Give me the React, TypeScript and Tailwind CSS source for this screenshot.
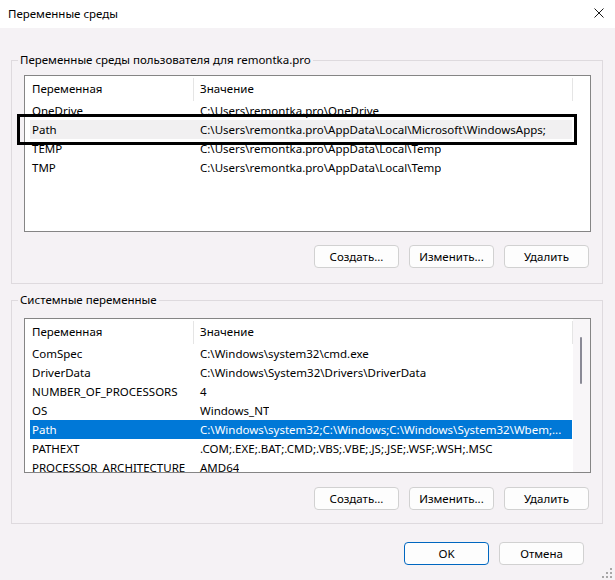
type Row = [string, string];

const userVars: Row[] = [
  ["OneDrive", "C:\\Users\\remontka.pro\\OneDrive"],
  ["Path", "C:\\Users\\remontka.pro\\AppData\\Local\\Microsoft\\WindowsApps;"],
  ["TEMP", "C:\\Users\\remontka.pro\\AppData\\Local\\Temp"],
  ["TMP", "C:\\Users\\remontka.pro\\AppData\\Local\\Temp"],
];

const systemVars: Row[] = [
  ["ComSpec", "C:\\Windows\\system32\\cmd.exe"],
  ["DriverData", "C:\\Windows\\System32\\Drivers\\DriverData"],
  ["NUMBER_OF_PROCESSORS", "4"],
  ["OS", "Windows_NT"],
  ["Path", "C:\\Windows\\system32;C:\\Windows;C:\\Windows\\System32\\Wbem;..."],
  ["PATHEXT", ".COM;.EXE;.BAT;.CMD;.VBS;.VBE;.JS;.JSE;.WSF;.WSH;.MSC"],
  ["PROCESSOR_ARCHITECTURE", "AMD64"],
];

function Button({ label, primary = false }: { label: string; primary?: boolean }) {
  return (
    <button
      className={`w-[85px] h-[23px] rounded-[4px] border bg-[#fdfdfd] text-[11.5px] leading-none text-black ${
        primary ? "border-[#0067c0]" : "border-[#d1d1d1]"
      }`}
    >
      {label}
    </button>
  );
}

function VarList({
  rows,
  focused,
  selected,
  scroll = false,
  height,
}: {
  rows: Row[];
  focused?: number;
  selected?: number;
  scroll?: boolean;
  height: string;
}) {
  return (
    <div className={`flex w-[567px] ${height} border border-[#858585] bg-white overflow-hidden`}>
      <div className="flex flex-col w-[548px]">
        <div className="flex h-[25px] shrink-0">
          <div className="flex items-center w-[168px] pl-[7px]">Переменная</div>
          <div className="w-px mt-[2px] bg-[#e5e5e5]" />
          <div className="flex items-center w-[378px] pl-[6px]">Значение</div>
          <div className="w-px mt-[2px] bg-[#e5e5e5]" />
        </div>
        {rows.map(([name, value], i) => (
          <div
            key={name}
            className={`flex items-center shrink-0 h-[19px] ml-[5px] w-[542px] whitespace-nowrap ${
              i === selected ? "bg-[#0078d7] text-white" : i === focused ? "bg-[#f1f0f1]" : ""
            }`}
          >
            <div className="w-[164px] pl-[2px] overflow-hidden">{name}</div>
            <div className="pl-[6px] overflow-hidden">{value}</div>
          </div>
        ))}
      </div>
      {scroll && (
        <div className="flex-1 bg-[#f8f6f8] pt-[18px]">
          <div className="ml-[7px] w-[2px] h-[47px] rounded-full bg-[#8a8a96]" />
        </div>
      )}
    </div>
  );
}

function ActionRow({ className = "" }: { className?: string }) {
  return (
    <div className={`flex justify-end gap-[10px] w-[567px] pr-[2px] ${className}`}>
      <Button label="Создать..." />
      <Button label="Изменить..." />
      <Button label="Удалить" />
    </div>
  );
}

export default function App() {
  return (
    <div className="relative w-[615px] h-[580px] bg-[#f5f2f5] text-[11.5px] text-black font-['Noto_Sans',sans-serif] overflow-hidden">
      <div className="flex items-center justify-between h-[28px] bg-white pl-[8px] pr-[11px]">
        <span>Переменные среды</span>
        <svg width="10" height="10" viewBox="0 0 10 10" className="mb-[2px]">
          <path d="M0.5 0.5 L9.5 9.5 M9.5 0.5 L0.5 9.5" stroke="#1a1a1a" strokeWidth="1" />
        </svg>
      </div>

      <fieldset className="mt-[24px] ml-[11px] w-[592px] border border-[#dedade] pl-[6px] pt-[7px] pb-[15px]">
        <legend className="px-[2px] leading-[16px]">Переменные среды пользователя для remontka.pro</legend>
        <div className="ml-[6px]">
          <VarList rows={userVars} focused={1} height="h-[157px]" />
          <ActionRow className="mt-[13px]" />
        </div>
      </fieldset>

      <fieldset className="mt-[8px] ml-[11px] w-[592px] border border-[#dedade] pl-[6px] pt-[10px] pb-[13px]">
        <legend className="px-[2px] leading-[16px]">Системные переменные</legend>
        <div className="ml-[6px]">
          <VarList rows={systemVars} selected={4} scroll height="h-[155px]" />
          <ActionRow className="mt-[14px]" />
        </div>
      </fieldset>

      <div className="flex justify-end gap-[10px] pr-[31px] mt-[18px]">
        <Button label="OK" primary />
        <Button label="Отмена" />
      </div>

      {/* resize grip */}
      <div className="absolute right-[3px] bottom-[2px] grid grid-cols-3 gap-[2px]">
        <span />
        <span />
        <span className="w-[2px] h-[2px] bg-[#a7a7a7]" />
        <span />
        <span className="w-[2px] h-[2px] bg-[#a7a7a7]" />
        <span className="w-[2px] h-[2px] bg-[#a7a7a7]" />
        <span className="w-[2px] h-[2px] bg-[#a7a7a7]" />
        <span className="w-[2px] h-[2px] bg-[#a7a7a7]" />
        <span className="w-[2px] h-[2px] bg-[#a7a7a7]" />
      </div>

      {/* highlight frame around the user Path row */}
      <div className="absolute left-[17px] top-[114px] w-[560px] h-[31px] border-[3px] border-black" />
    </div>
  );
}
